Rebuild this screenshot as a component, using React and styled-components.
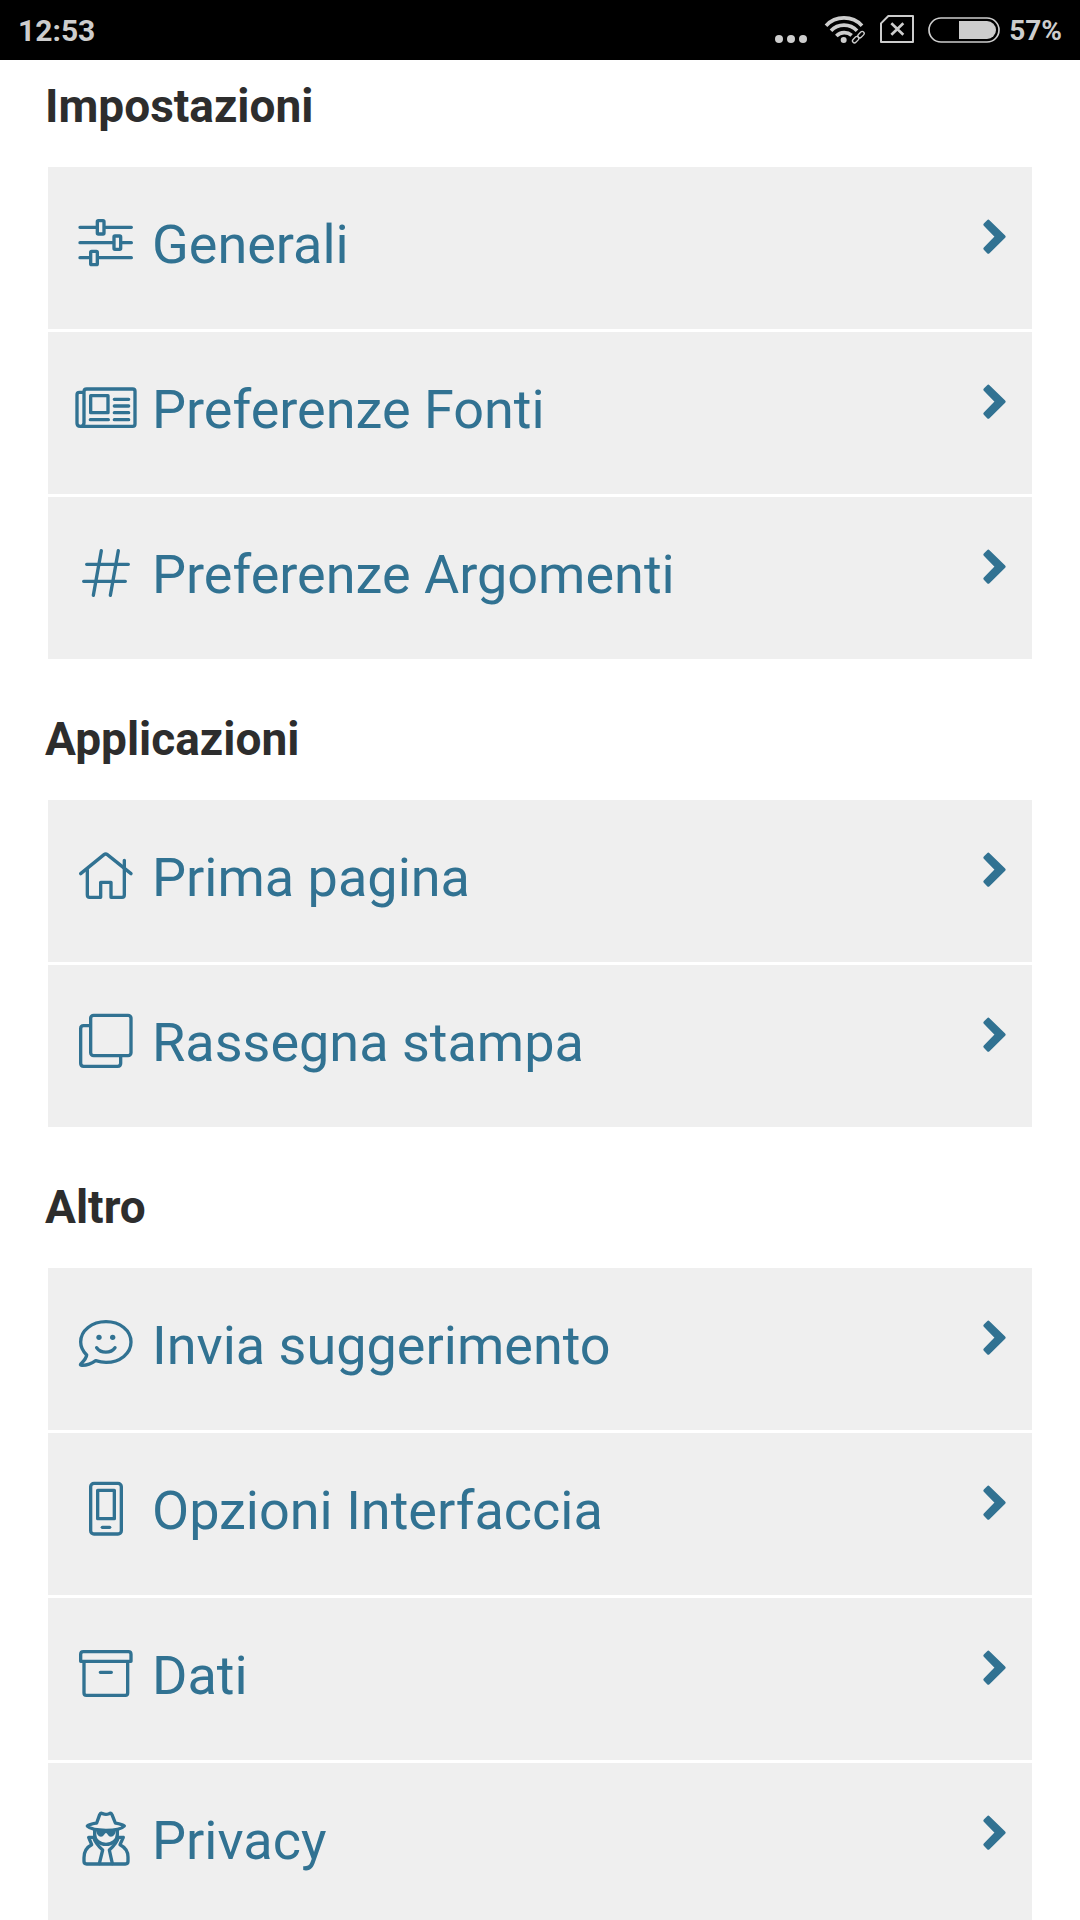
import React from 'react';
import styled, { createGlobalStyle } from 'styled-components';

const sections = [
  {
    title: 'Impostazioni',
    items: [
      { label: 'Generali', icon: 'sliders' },
      { label: 'Preferenze Fonti', icon: 'newspaper' },
      { label: 'Preferenze Argomenti', icon: 'hashtag' },
    ],
  },
  {
    title: 'Applicazioni',
    items: [
      { label: 'Prima pagina', icon: 'home' },
      { label: 'Rassegna stampa', icon: 'clone' },
    ],
  },
  {
    title: 'Altro',
    items: [
      { label: 'Invia suggerimento', icon: 'comment' },
      { label: 'Opzioni Interfaccia', icon: 'mobile' },
      { label: 'Dati', icon: 'archive' },
      { label: 'Privacy', icon: 'secret' },
    ],
  },
];

const icons = {
  sliders: {
    viewBox: '228 639 180 180',
    shape: (
      <>
        <path d="M240 682H287M317 682H394M240 728H337M368 728H394M240 773H266M297 773H394" />
        <rect x="292" y="662" width="20" height="40" rx="3" />
        <rect x="342" y="708" width="20" height="40" rx="3" />
        <rect x="272" y="754" width="20" height="40" rx="3" />
      </>
    ),
  },
  newspaper: {
    viewBox: '48 54 180 180',
    shape: (
      <>
        <path d="M72 97H58Q51 97 51 104V190Q51 199 61 199H218Q225 199 225 192V94Q225 87 218 87H80Q72 87 72 95V188Q72 199 61 199" />
        <rect x="92" y="107" width="52" height="51" />
        <path d="M91 179H145M163 118H206M163 138H206M163 158H206M163 179H206" />
      </>
    ),
  },
  hashtag: {
    viewBox: '48 54 180 180',
    shape: <path d="M124 77L100 211M175 77L151 211M80 118H205M71 169H196" />,
  },
  home: {
    viewBox: '48 63 180 180',
    shape: (
      <>
        <path d="M62 146L132 89Q137 85 142 89L213 146" />
        <path d="M82 134V210Q82 217 89 217H122V172H153V217H186Q193 217 193 210V106" />
      </>
    ),
  },
  clone: {
    viewBox: '48 63 180 180',
    shape: (
      <>
        <rect x="92" y="76" width="121" height="121" rx="9" />
        <path d="M90 107H71Q62 107 62 116V220Q62 229 71 229H173Q182 229 182 220V200" />
      </>
    ),
  },
  comment: {
    viewBox: '48 57 180 180',
    shape: (
      <>
        <path d="M107 197C117 200 127 202 138 202C181 202 213 175 213 141C213 106 180 80 138 80C96 80 62 106 62 141C62 156 69 169 80 180C79 191 67 202 63 206C60 209 61 211 65 211C82 212 97 204 107 197Z" />
        <path d="M110 158C123 176 152 176 165 158" />
        <circle className="solid" cx="117" cy="127" r="8" />
        <circle className="solid" cx="158" cy="127" r="8" />
      </>
    ),
  },
  mobile: {
    viewBox: '48 57 180 180',
    shape: (
      <>
        <rect x="92" y="70" width="92" height="152" rx="10" />
        <rect x="113" y="91" width="50" height="85" />
        <path d="M127 202H149" />
      </>
    ),
  },
  archive: {
    viewBox: '48 57 180 180',
    shape: (
      <>
        <path d="M62 109V88Q62 80 70 80H205Q213 80 213 88V109Z" />
        <path d="M72 112V204Q72 211 79 211H196Q203 211 203 204V112M121 142H154" />
      </>
    ),
  },
  secret: {
    viewBox: '48 57 180 180',
    shape: (
      <>
        <path d="M110 99L119 74Q122 68 128 71Q138 75 147 71Q153 68 156 74L166 99C176 101 187 103 193 108C185 117 162 121 138 121C114 121 91 117 82 108C88 103 100 101 110 99Z" />
        <path d="M104 121V134C104 151 119 163 138 163C157 163 172 151 172 134V121" />
        <path
          className="solid"
          d="M108 118H168C167 133 161 140 153 140C144 140 143 130 138 129C133 130 132 140 123 140C115 140 109 133 108 118Z"
        />
        <path d="M101 142H86L95 164C79 172 72 183 72 203V214Q72 222 80 222H196Q204 222 204 214V201C204 183 196 172 180 164L190 142H175" />
        <path d="M101 142C105 158 116 169 128 180L118 221M175 142C171 158 160 169 148 180L157 221" />
      </>
    ),
  },
};

const StatusIcons = () => (
  <>
    <StatusSvg width="32" height="36" viewBox="45 36 96 108" aria-hidden="true">
      <circle cx="57" cy="117" r="12" />
      <circle cx="93" cy="117" r="12" />
      <circle cx="129" cy="117" r="12" />
    </StatusSvg>
    <StatusSvg width="45" height="36" viewBox="183 36 135 108" aria-label="Wi-Fi">
      <g fill="none" stroke="#cdcdcd" strokeWidth="11">
        <path d="M198 77C227 46 277 46 306 77" />
        <path d="M213 92C234 70 270 70 291 92" />
        <path d="M229 108C242 95 262 95 275 106" />
      </g>
      <circle cx="251" cy="120" r="9" />
      <g fill="none" stroke="#cdcdcd" strokeWidth="4">
        <rect x="-11" y="-6" width="22" height="12" rx="6" transform="translate(303 104) rotate(-45)" />
        <rect x="-11" y="-6" width="22" height="12" rx="6" transform="translate(287 119) rotate(-45)" />
      </g>
    </StatusSvg>
    <StatusSvg width="34" height="36" viewBox="360 36 102 108" aria-label="SIM">
      <g fill="none" stroke="#cdcdcd">
        <path d="M385 48H459V126H363V70Z" strokeWidth="6" strokeLinejoin="round" />
        <path d="M394 70L430 104M430 70L394 104" strokeWidth="8" />
      </g>
    </StatusSvg>
    <StatusSvg width="72" height="36" viewBox="504 36 216 108" aria-label="Batteria">
      <rect x="507" y="54" width="210" height="72" rx="36" fill="none" stroke="#cdcdcd" strokeWidth="5" />
      <path d="M597 63H681A27 27 0 0 1 681 117H597Z" />
    </StatusSvg>
  </>
);

const MenuRow = ({ label, icon }) => (
  <Row>
    <RowLink href="#">
      <RowIcon viewBox={icons[icon].viewBox} aria-hidden="true">
        {icons[icon].shape}
      </RowIcon>
      <RowLabel>{label}</RowLabel>
      <Chevron viewBox="129 177 72 108" aria-hidden="true">
        <path d="M135 194L145 184L192 230L145 276L135 266L170 230Z" />
      </Chevron>
    </RowLink>
  </Row>
);

const App = () => (
  <Screen>
    <GlobalStyle />
    <StatusBar>
      <Clock>12:53</Clock>
      <StatusGroup>
        <StatusIcons />
      </StatusGroup>
      <BatteryLevel>57%</BatteryLevel>
    </StatusBar>
    <Content>
      {sections.map((section) => (
        <Section key={section.title}>
          <SectionTitle>{section.title}</SectionTitle>
          <Menu>
            {section.items.map((item) => (
              <MenuRow key={item.label} {...item} />
            ))}
          </Menu>
        </Section>
      ))}
    </Content>
  </Screen>
);

const GlobalStyle = createGlobalStyle`
  * {
    box-sizing: border-box;
  }

  body {
    margin: 0;
    background: #ffffff;
    font-family: Roboto, sans-serif;
  }
`;

const Screen = styled.div`
  display: flex;
  flex-direction: column;
  height: 100vh;
`;

const StatusBar = styled.header`
  display: flex;
  align-items: center;
  flex-shrink: 0;
  height: 60px;
  padding: 0 18px;
  background: #000000;
  color: #cdcdcd;
`;

const StatusText = styled.span`
  padding-top: 2px;
  font-size: 28px;
  font-weight: 700;
  line-height: 36px;
`;

const Clock = styled(StatusText)`
  flex: 1;
  font-size: 30px;
`;

const BatteryLevel = styled(StatusText)``;

const StatusGroup = styled.div`
  display: flex;
  gap: 14px;
  margin-right: 9px;
`;

const StatusSvg = styled.svg`
  fill: #cdcdcd;
`;

const Content = styled.main`
  flex: 1;
  min-height: 0;
  overflow-y: auto;
  scrollbar-width: none;
`;

const Section = styled.section`
  padding: 0 48px 34px;
`;

const SectionTitle = styled.h2`
  margin: 0 -3px;
  padding: 18px 0 33px;
  color: #2d2d2d;
  font-size: 46px;
  font-weight: 700;
  line-height: 56px;
`;

const Menu = styled.ul`
  display: flex;
  flex-direction: column;
  gap: 3px;
  margin: 0;
  padding: 0;
  list-style: none;
`;

const Row = styled.li`
  background: #efefef;
`;

const RowLink = styled.a`
  display: flex;
  align-items: flex-start;
  padding: 46px 25px 52px 28px;
  color: #317292;
  text-decoration: none;
`;

const RowIcon = styled.svg`
  flex-shrink: 0;
  width: 60px;
  height: 60px;
  margin-right: 16px;
  overflow: visible;
  fill: none;
  stroke: currentColor;
  stroke-width: 10;
  stroke-linecap: round;
  stroke-linejoin: round;

  .solid {
    fill: currentColor;
    stroke: none;
  }
`;

const RowLabel = styled.span`
  flex: 1;
  font-size: 54px;
  line-height: 64px;
`;

const Chevron = styled.svg`
  flex-shrink: 0;
  width: 24px;
  height: 36px;
  margin-top: 6px;
  overflow: visible;
  fill: currentColor;
  stroke: currentColor;
  stroke-width: 10;
  stroke-linejoin: round;
`;

export default App;
